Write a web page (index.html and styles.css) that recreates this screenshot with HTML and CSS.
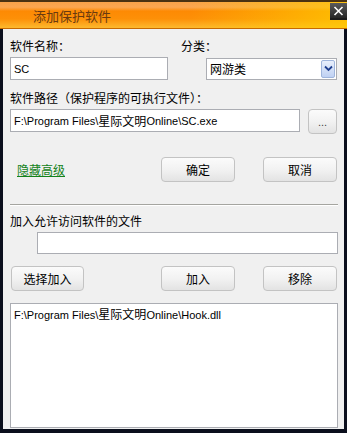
FILE: index.html
```html
<!DOCTYPE html>
<html lang="zh-CN">
<head>
    <meta charset="UTF-8">
    <title>添加保护软件</title>
    <link rel="stylesheet" href="styles.css">
</head>
<body>
    <div class="window">
        <div class="titlebar">
            <span class="title">添加保护软件</span>
            <span class="close">
                <svg width="11" height="10" viewBox="0 0 11 10">
                    <path d="M1.5 1 L9.5 9 M9.5 1 L1.5 9" stroke="#ffffff" stroke-width="1.6" fill="none"/>
                </svg>
            </span>
        </div>
        <div class="panel">
            <div class="row labels">
                <span class="name-label">软件名称：</span>
                <span>分类：</span>
            </div>
            <div class="row fields">
                <div class="textbox name-box">SC</div>
                <div class="select">
                    <span>网游类</span>
                    <span class="drop">
                        <svg width="9" height="7" viewBox="0 0 9 7">
                            <path d="M1 1.5 L4.5 5 L8 1.5" stroke="#1f3f8f" stroke-width="1.8" fill="none"/>
                        </svg>
                    </span>
                </div>
            </div>
            <div class="row label2">软件路径（保护程序的可执行文件）：</div>
            <div class="row path">
                <div class="textbox path-box">F:\Program Files\<span class="cjk">星际文明</span>Online\SC.exe</div>
                <button class="btn dots">...</button>
            </div>
            <div class="row actions">
                <a class="link" href="#">隐藏高级</a>
                <div class="btns">
                    <button class="btn">确定</button>
                    <button class="btn">取消</button>
                </div>
            </div>
            <div class="sep"></div>
            <div class="row label3">加入允许访问软件的文件</div>
            <div class="textbox file-box"></div>
            <div class="row actions2">
                <button class="btn">选择加入</button>
                <div class="btns">
                    <button class="btn">加入</button>
                    <button class="btn">移除</button>
                </div>
            </div>
            <div class="listbox">
                <div class="item">F:\Program Files\<span class="cjk">星际文明</span>Online\Hook.dll</div>
            </div>
        </div>
    </div>
</body>
</html>
```

FILE: styles.css
```css
:root {
    --frame: #0b0f1d;
    --face: #f0f0f0;
    --edge: #abadb3;
}

body {
    margin: 0;
    background-color: var(--frame);
    font-family: "Liberation Sans", "Noto Sans CJK SC", sans-serif;
    font-size: 12px;
    color: #000000;
}

.window {
    width: 347px;
    height: 433px;
    display: flex;
    flex-direction: column;
    background-color: var(--frame);
}

.titlebar {
    height: 29px;
    box-sizing: border-box;
    display: flex;
    align-items: flex-start;
    border-top: 2px solid #4a3212;
    border-bottom: 1px solid #c76a00;
    background:
        linear-gradient(to right, rgba(255, 200, 0, 0) 0%, rgba(255, 200, 0, 0) 55%, rgba(255, 205, 0, 0.75) 100%),
        linear-gradient(to bottom, #f7a24a 0%, #fba650 20%, #fd8a04 35%, #fd9008 65%, #fdb92e 100%);
}

.title {
    margin: 6px 0 0 33px;
    font-family: "Noto Sans CJK SC", sans-serif;
    font-size: 13px;
    line-height: 16px;
    color: #6a3a10;
}

.close {
    margin-left: auto;
    margin-top: 1px;
    width: 17px;
    height: 15px;
    display: flex;
    align-items: center;
    justify-content: center;
    background: linear-gradient(to bottom, #5a5a5a, #262626);
    border-bottom: 2px solid #1c1c1c;
}

.panel {
    flex: 1;
    display: flex;
    flex-direction: column;
    background-color: var(--face);
    margin: 0 3px 4px 3px;
    padding: 0 6px 0 7px;
}

.row {
    display: flex;
    align-items: center;
}

.labels {
    margin-top: 8px;
    height: 16px;
    font-family: "Noto Sans CJK SC", sans-serif;
}

.name-label {
    width: 171px;
}

.fields {
    margin-top: 4px;
    height: 23px;
    justify-content: space-between;
    padding-right: 1px;
}

.textbox {
    box-sizing: border-box;
    background-color: #ffffff;
    border: 1px solid var(--edge);
    padding: 0 3px;
    display: flex;
    align-items: center;
    font-family: "Liberation Sans", "Noto Sans CJK SC", sans-serif;
    font-size: 11px;
    white-space: nowrap;
}

.cjk {
    font-family: "Noto Sans CJK SC", sans-serif;
    font-size: 12px;
}

.name-box {
    width: 158px;
    height: 23px;
}

.select {
    box-sizing: border-box;
    width: 131px;
    height: 22px;
    background-color: #ffffff;
    border: 1px solid var(--edge);
    display: flex;
    align-items: center;
    justify-content: space-between;
    padding: 0 1px 0 3px;
    font-family: "Noto Sans CJK SC", sans-serif;
}

.drop {
    width: 14px;
    height: 18px;
    box-sizing: border-box;
    border: 1px solid #9fb5dc;
    border-radius: 2px;
    background: linear-gradient(to bottom, #e8effc, #bfd1f3);
    display: flex;
    align-items: center;
    justify-content: center;
}

.label2 {
    margin-top: 9px;
    height: 16px;
    font-family: "Noto Sans CJK SC", sans-serif;
}

.path {
    margin-top: 4px;
    height: 25px;
    align-items: flex-start;
    justify-content: space-between;
    padding-right: 1px;
}

.path-box {
    width: 290px;
    height: 23px;
}

.btn {
    box-sizing: border-box;
    width: 74px;
    height: 25px;
    margin: 0;
    padding: 0;
    border: 1px solid #c3c3c3;
    border-radius: 4px;
    background: linear-gradient(to bottom, #fbfbfb 0%, #f2f2f2 50%, #e3e3e3 100%);
    font-family: "Noto Sans CJK SC", sans-serif;
    font-size: 12px;
    color: #000000;
}

.dots {
    width: 29px;
    height: 25px;
    font-family: "Liberation Sans", sans-serif;
    font-size: 11px;
    color: #444444;
}

.actions {
    margin-top: 23px;
    height: 25px;
    justify-content: space-between;
    padding-right: 1px;
}

.link {
    margin-left: 7px;
    color: #13821a;
    font-family: "Noto Sans CJK SC", sans-serif;
    text-decoration: underline;
}

.btns {
    display: flex;
    gap: 28px;
}

.sep {
    margin-top: 22px;
    height: 1px;
    background-color: #a5a5a0;
    border-bottom: 1px solid #ffffff;
}

.label3 {
    margin-top: 6px;
    height: 16px;
    font-family: "Noto Sans CJK SC", sans-serif;
}

.file-box {
    margin: 4px 0 0 27px;
    height: 22px;
}

.actions2 {
    margin-top: 12px;
    height: 25px;
    justify-content: space-between;
    padding: 0 1px 0 1px;
}

.actions2 > .btn {
    width: 73px;
}

.listbox {
    flex: 1;
    margin: 12px 0 1px 0;
    background-color: #ffffff;
    border: 1px solid var(--edge);
    padding: 2px 3px;
    font-size: 11px;
}

.item {
    line-height: 16px;
    white-space: nowrap;
}
```
